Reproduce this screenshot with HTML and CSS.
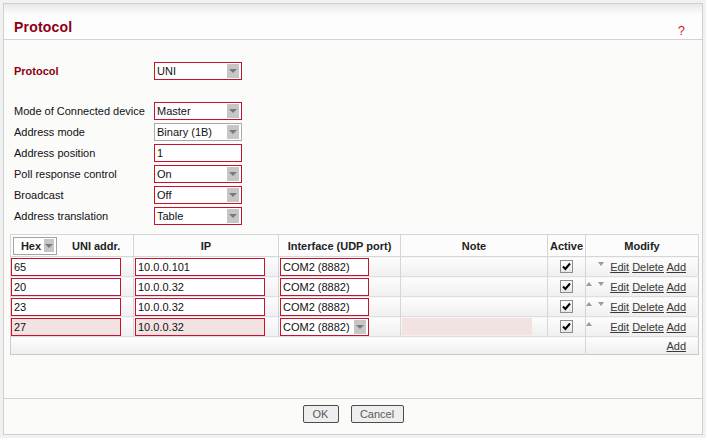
FILE: index.html
```html
<!DOCTYPE html>
<html lang="en">
<head>
  <meta charset="UTF-8">
  <title>Protocol</title>
  <link rel="stylesheet" href="styles.css">
</head>
<body>
  <div class="panel">
    <div class="panel-head">
      <h1 class="panel-title">Protocol</h1>
      <a class="help" href="#">?</a>
    </div>

    <div class="panel-body">
      <div class="form-row main-row">
        <label class="field-label strong">Protocol</label>
        <div class="select"><span class="select-text">UNI</span><span class="select-arrow"></span></div>
      </div>

      <div class="form-group">
        <div class="form-row">
          <label class="field-label">Mode of Connected device</label>
          <div class="select"><span class="select-text">Master</span><span class="select-arrow"></span></div>
        </div>
        <div class="form-row">
          <label class="field-label">Address mode</label>
          <div class="select disabled"><span class="select-text">Binary (1B)</span><span class="select-arrow"></span></div>
        </div>
        <div class="form-row">
          <label class="field-label">Address position</label>
          <input class="text-input field-input" type="text" value="1">
        </div>
        <div class="form-row">
          <label class="field-label">Poll response control</label>
          <div class="select"><span class="select-text">On</span><span class="select-arrow"></span></div>
        </div>
        <div class="form-row">
          <label class="field-label">Broadcast</label>
          <div class="select"><span class="select-text">Off</span><span class="select-arrow"></span></div>
        </div>
        <div class="form-row">
          <label class="field-label">Address translation</label>
          <div class="select"><span class="select-text">Table</span><span class="select-arrow"></span></div>
        </div>
      </div>

      <table class="grid">
        <colgroup>
          <col style="width:123px">
          <col style="width:145px">
          <col style="width:122px">
          <col style="width:147px">
          <col style="width:38px">
          <col style="width:113px">
        </colgroup>
        <thead>
          <tr>
            <th class="first-head">
              <div class="head-wrap">
                <div class="select small"><span class="select-text">Hex</span><span class="select-arrow"></span></div>
                <span>UNI addr.</span>
              </div>
            </th>
            <th>IP</th>
            <th>Interface (UDP port)</th>
            <th>Note</th>
            <th>Active</th>
            <th>Modify</th>
          </tr>
        </thead>
        <tbody>
          <tr>
            <td class="c-addr"><input class="text-input addr" type="text" value="65"></td>
            <td class="c-ip"><input class="text-input ip" type="text" value="10.0.0.101"></td>
            <td class="c-if"><input class="text-input iface" type="text" value="COM2 (8882)"></td>
            <td></td>
            <td class="c-check"><span class="checkbox"><svg width="9" height="9" viewBox="0 0 9 9"><path d="M1 4.5 L3.4 7 L8 1.5" fill="none" stroke="#000" stroke-width="2"/></svg></span></td>
            <td class="c-modify"><span class="arrow up hidden"></span><span class="arrow down"></span><a href="#">Edit</a> <a href="#">Delete</a> <a href="#">Add</a></td>
          </tr>
          <tr>
            <td class="c-addr"><input class="text-input addr" type="text" value="20"></td>
            <td class="c-ip"><input class="text-input ip" type="text" value="10.0.0.32"></td>
            <td class="c-if"><input class="text-input iface" type="text" value="COM2 (8882)"></td>
            <td></td>
            <td class="c-check"><span class="checkbox"><svg width="9" height="9" viewBox="0 0 9 9"><path d="M1 4.5 L3.4 7 L8 1.5" fill="none" stroke="#000" stroke-width="2"/></svg></span></td>
            <td class="c-modify"><span class="arrow up"></span><span class="arrow down"></span><a href="#">Edit</a> <a href="#">Delete</a> <a href="#">Add</a></td>
          </tr>
          <tr>
            <td class="c-addr"><input class="text-input addr" type="text" value="23"></td>
            <td class="c-ip"><input class="text-input ip" type="text" value="10.0.0.32"></td>
            <td class="c-if"><input class="text-input iface" type="text" value="COM2 (8882)"></td>
            <td></td>
            <td class="c-check"><span class="checkbox"><svg width="9" height="9" viewBox="0 0 9 9"><path d="M1 4.5 L3.4 7 L8 1.5" fill="none" stroke="#000" stroke-width="2"/></svg></span></td>
            <td class="c-modify"><span class="arrow up"></span><span class="arrow down"></span><a href="#">Edit</a> <a href="#">Delete</a> <a href="#">Add</a></td>
          </tr>
          <tr class="edit-row">
            <td class="c-addr"><input class="text-input addr" type="text" value="27"></td>
            <td class="c-ip"><input class="text-input ip" type="text" value="10.0.0.32"></td>
            <td class="c-if"><div class="select iface-select"><span class="select-text">COM2 (8882)</span><span class="select-arrow"></span></div></td>
            <td class="c-note"><input class="note-input" type="text" value=""></td>
            <td class="c-check"><span class="checkbox"><svg width="9" height="9" viewBox="0 0 9 9"><path d="M1 4.5 L3.4 7 L8 1.5" fill="none" stroke="#000" stroke-width="2"/></svg></span></td>
            <td class="c-modify"><span class="arrow up"></span><span class="arrow down hidden"></span><a href="#">Edit</a> <a href="#">Delete</a> <a href="#">Add</a></td>
          </tr>
          <tr class="add-row">
            <td colspan="5"></td>
            <td class="c-modify"><a href="#">Add</a></td>
          </tr>
        </tbody>
      </table>
    </div>

    <div class="panel-foot">
      <button class="btn btn-ok">OK</button>
      <button class="btn btn-cancel">Cancel</button>
    </div>
  </div>
</body>
</html>
```

FILE: styles.css
```css
body {
  margin: 0;
  background-color: #f1f1ef;
  font-family: "Liberation Sans", Arial, sans-serif;
  font-size: 11px;
  color: #111;
}
.panel {
  margin: 3px;
  width: 700px;
  height: 432px;
  box-sizing: border-box;
  border: 1px solid #cfcfcf;
  background-color: #fbfbfa;
  display: flex;
  flex-direction: column;
}
.panel-head {
  height: 35px;
  border-bottom: 1px solid #d2d2d2;
  background: linear-gradient(#e8e8e8 0, #fdfdfd 11px, #fdfdfd 100%);
  display: flex;
  justify-content: space-between;
  align-items: flex-start;
}
.panel-title {
  margin: 0;
  padding: 14px 0 0 10px;
  font-size: 14px;
  line-height: 18px;
  font-weight: bold;
  letter-spacing: 0.2px;
  color: #8c0014;
}
.help {
  margin: 19px 17px 0 0;
  font-size: 13px;
  line-height: 16px;
  color: #cf2238;
  text-decoration: none;
}
.panel-body {
  flex: 1;
  padding: 22px 4px 0 6px;
}
.form-row {
  display: flex;
  align-items: center;
  height: 18px;
  padding-left: 4px;
}
.main-row {
  margin-bottom: 22px;
}
.form-group {
  display: flex;
  flex-direction: column;
  gap: 3px;
}
.field-label {
  width: 140px;
  color: #111;
}
.field-label.strong {
  font-weight: bold;
  color: #8c0014;
}
.select {
  display: flex;
  align-items: center;
  width: 88px;
  height: 18px;
  box-sizing: border-box;
  border: 1px solid #c4122f;
  background-color: #fff;
  padding-left: 2px;
}
.select.disabled {
  border-color: #a9a9a9;
}
.select-text {
  flex: 1;
  white-space: nowrap;
}
.select-arrow {
  width: 12px;
  height: 14px;
  margin-right: 2px;
  background-color: #c6c6c6;
  display: flex;
  align-items: center;
  justify-content: center;
}
.select-arrow::after {
  content: "";
  border-left: 4px solid transparent;
  border-right: 4px solid transparent;
  border-top: 4px solid #7a7a7a;
}
.select.small {
  width: 44px;
  height: 18px;
  border-color: #a3a3a3;
  padding-left: 4px;
  font-weight: bold;
}
.select.small .select-arrow {
  width: 10px;
  height: 13px;
}
.text-input {
  height: 18px;
  box-sizing: border-box;
  border: 1px solid #c4122f;
  background-color: #fff;
  padding: 0 2px;
  margin: 0;
  font-family: "Liberation Sans", Arial, sans-serif;
  font-size: 11px;
  color: #111;
  outline: none;
}
.field-input {
  width: 88px;
}
.grid {
  margin-top: 9px;
  width: 688px;
  table-layout: fixed;
  border-collapse: collapse;
  border: 1px solid #cacaca;
}
.grid th {
  height: 21px;
  padding: 0;
  border: 1px solid #d6d6d6;
  background-color: #fcfcfc;
  font-weight: bold;
  color: #222;
  text-align: center;
}
.head-wrap {
  display: flex;
  align-items: center;
  gap: 15px;
  padding-left: 2px;
}
.grid td {
  height: 19px;
  padding: 0;
  border-top: 1px solid #dedede;
  border-left: 1px solid #d6d6d6;
  background: linear-gradient(#fdfdfd, #efefef);
  vertical-align: middle;
}
.grid td.c-addr {
  padding-left: 0;
}
.addr {
  width: 110px;
}
.c-ip, .c-if, .c-note {
  padding-left: 1px !important;
}
.ip {
  width: 130px;
}
.iface {
  width: 89px;
}
.iface-select {
  width: 89px;
}
.edit-row .text-input {
  background-color: #f3e2e2;
}
.note-input {
  width: 130px;
  height: 17px;
  box-sizing: border-box;
  border: none;
  margin: 0;
  background-color: #f3e2e2;
  outline: none;
}
.c-check {
  text-align: center;
}
.checkbox {
  display: inline-flex;
  align-items: center;
  justify-content: center;
  width: 11px;
  height: 11px;
  border: 1px solid #8c8c8c;
  background: linear-gradient(#ffffff, #e6e6e6);
  vertical-align: middle;
}
.c-modify {
  text-align: right;
  padding-right: 12px !important;
  white-space: nowrap;
}
.c-modify a {
  color: #383838;
  text-decoration: underline;
}
.arrow {
  display: inline-block;
  width: 0;
  height: 0;
  border-left: 3px solid transparent;
  border-right: 3px solid transparent;
  margin-right: 6px;
  vertical-align: 5px;
}
.arrow.up {
  border-bottom: 4px solid #9a9a9a;
}
.arrow.down {
  border-top: 4px solid #9a9a9a;
}
.arrow.hidden {
  visibility: hidden;
}
.add-row td {
  height: 17px;
  border-left: none;
}
.add-row td.c-modify {
  border-left: 1px solid #d6d6d6;
}
.panel-foot {
  height: 36px;
  box-sizing: border-box;
  border-top: 1px solid #d2d2d2;
  padding-top: 6px;
  display: flex;
  justify-content: center;
  align-items: flex-start;
  gap: 12px;
}
.btn {
  height: 18px;
  padding: 0;
  border: 1px solid #4d4d4d;
  border-radius: 2px;
  background-color: #eeeeee;
  color: #5a5a5a;
  font-family: "Liberation Sans", Arial, sans-serif;
  font-size: 11px;
  cursor: pointer;
}
.btn-ok {
  width: 36px;
}
.btn-cancel {
  width: 53px;
}
```
